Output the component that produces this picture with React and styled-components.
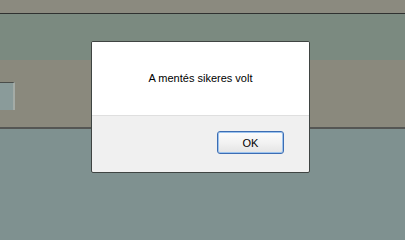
import styled, { createGlobalStyle } from "styled-components";

const Global = createGlobalStyle`
  html, body {
    margin: 0;
    padding: 0;
    background: #7f9190;
  }
  body {
    width: 405px;
    min-height: 205px;
    overflow: hidden;
    font-family: "Liberation Sans", Arial, sans-serif;
  }
`;

const Page = styled.div`
  position: relative;
  width: 405px;
  height: 205px;
  display: flex;
  flex-direction: column;
  background: #7f9190;
`;

const Band = styled.div`
  height: ${(p) => p.h}px;
  background: ${(p) => p.bg};
  border-bottom: ${(p) => (p.line ? `${p.line}px solid ${p.lineColor}` : "none")};
  flex-shrink: 0;
  display: flex;
  align-items: flex-start;
`;

const Field = styled.div`
  margin-top: 22px;
  width: 13px;
  height: 27px;
  background: #8a9b9a;
  border-top: 1px solid #4a4d4a;
  border-right: 2px solid #a4aba6;
`;

const Dialog = styled.div`
  position: absolute;
  left: 91px;
  top: 41px;
  width: 217px;
  height: 130px;
  border: 1px solid #3f4442;
  border-radius: 2px;
  background: #f0f0f0;
  display: flex;
  flex-direction: column;
  overflow: hidden;
`;

const Message = styled.div`
  height: 74px;
  background: #fff;
  border-bottom: 1px solid #dfdfdf;
  display: flex;
  align-items: center;
  justify-content: center;
  padding-bottom: 2px;
  box-sizing: border-box;
  font-size: 11px;
  color: #000;
`;

const Footer = styled.div`
  flex: 1;
  display: flex;
  justify-content: flex-end;
  padding: 15px 25px 0 0;
`;

const Button = styled.button`
  width: 67px;
  height: 23px;
  border: 1px solid #3c6db3;
  border-radius: 3px;
  box-shadow: inset 0 0 0 1px #9cc3ee;
  background: linear-gradient(#fcfcfc, #f2f2f2 50%, #e4e4e4);
  font-family: "Liberation Sans", Arial, sans-serif;
  font-size: 11px;
  color: #000;
  padding: 0;
`;

export default function App() {
  return (
    <>
      <Global />
      <Page>
        <Band h={13} bg="#8b8a7f" line={1} lineColor="#2f3130" />
        <Band h={46} bg="#7b8a80" />
        <Band h={67} bg="#8a897d" line={2} lineColor="#545654">
          <Field />
        </Band>
        <Dialog>
          <Message>A mentés sikeres volt</Message>
          <Footer>
            <Button>OK</Button>
          </Footer>
        </Dialog>
      </Page>
    </>
  );
}
